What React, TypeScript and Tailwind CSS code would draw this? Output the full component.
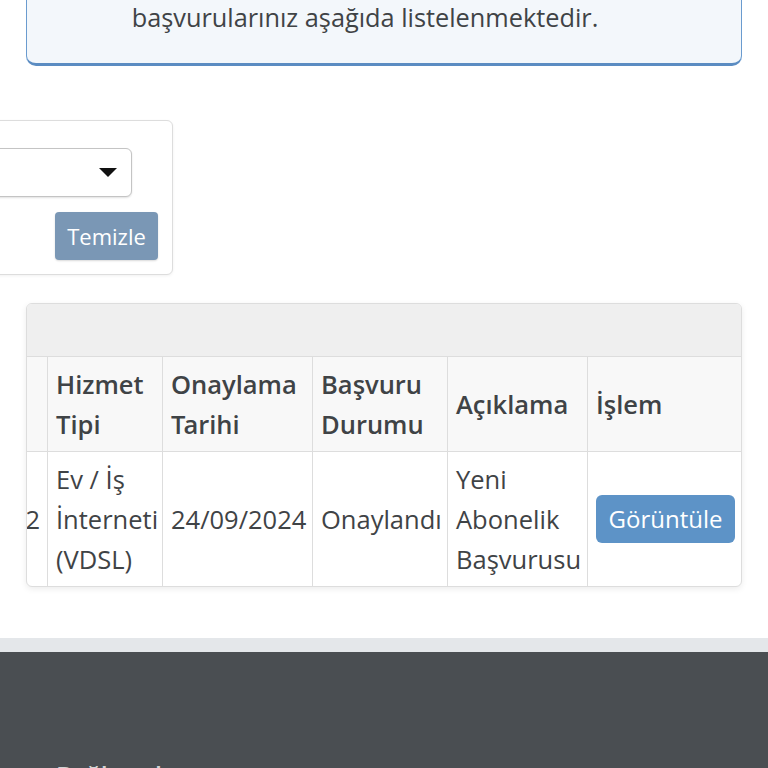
import React from "react";

export default function App() {
  const cell = "border border-[#dddddd] px-[8px] py-[7px] align-middle";
  const th =
    cell + " border-t-0 font-['Open_Sans_SemiBold','Open_Sans',sans-serif] font-semibold";
  return (
    <div className="min-h-[900px] overflow-hidden bg-white font-['Open_Sans',_sans-serif] text-[#3f4346]">
      <div className="px-[26px]">
        {/* info box */}
        <div className="-mt-[40px] rounded-[10px] border border-b-[3px] border-[#6a9bcf] border-b-[#5b8cc2] bg-[#f3f7fb] pt-[38px] pb-[28px] pr-[38px] text-center text-[25.3px] leading-[36px]">
          başvurularınız aşağıda listelenmektedir.
        </div>

        {/* filter card */}
        <div className="mt-[54px] -ml-[253px] w-[400px] rounded-[6px] border border-[#dddddd] bg-white pt-[27px] pb-[14px] pr-[14px] shadow-[0_1px_3px_rgba(0,0,0,0.06)]">
          <div className="flex flex-col items-end">
            <div className="mr-[26px] flex h-[49px] w-[300px] items-center justify-end rounded-[6px] border border-[#c4c4c4] bg-white pr-[14px] shadow-[0_1px_2px_rgba(0,0,0,0.12)]">
              <svg width="18" height="9" viewBox="0 0 18 9">
                <polygon points="0,0 18,0 9,9" fill="#111" />
              </svg>
            </div>
            <button className="mt-[15px] h-[48px] w-[103px] rounded-[4px] bg-[#7a97b5] text-[22px] text-white shadow-[0_1px_2px_rgba(0,0,0,0.15)]">
              Temizle
            </button>
          </div>
        </div>

        {/* table panel */}
        <div className="mt-[28px] overflow-hidden rounded-[6px] border border-[#dddddd] bg-white shadow-[0_2px_6px_rgba(0,0,0,0.08)]">
          <div className="h-[53px] border-b border-[#dddddd] bg-[#efefef]" />
          <div className="overflow-hidden">
            <table className="-ml-[40px] w-[755px] max-w-none table-fixed border-collapse text-[25.5px] leading-[40px]">
              <colgroup>
                <col className="w-[60px]" />
                <col className="w-[115px]" />
                <col className="w-[150px]" />
                <col className="w-[135px]" />
                <col className="w-[140px]" />
                <col className="w-[155px]" />
              </colgroup>
              <thead>
                <tr className="bg-[#f8f8f8] text-left">
                  <th className={th}></th>
                  <th className={th}>Hizmet Tipi</th>
                  <th className={th}>Onaylama Tarihi</th>
                  <th className={th}>Başvuru Durumu</th>
                  <th className={th}>Açıklama</th>
                  <th className={th + " border-r-0"}>İşlem</th>
                </tr>
              </thead>
              <tbody>
                <tr>
                  <td className={cell + " border-b-0 pr-[7px] text-right"}>2</td>
                  <td className={cell + " border-b-0"}>Ev / İş İnterneti (VDSL)</td>
                  <td className={cell + " border-b-0"}>24/09/2024</td>
                  <td className={cell + " border-b-0"}>Onaylandı</td>
                  <td className={cell + " border-b-0"}>Yeni Abonelik Başvurusu</td>
                  <td className={cell + " border-b-0 border-r-0"}>
                    <button className="h-[48px] w-[139px] rounded-[6px] bg-[#5d93c7] text-[24px] leading-[48px] text-white">
                      Görüntüle
                    </button>
                  </td>
                </tr>
              </tbody>
            </table>
          </div>
        </div>
      </div>

      {/* footer */}
      <div className="mt-[51px] h-[14px] bg-[#e4e7ea]" />
      <div className="h-[300px] bg-[#4a4e52] px-[56px] pt-[108px]">
        <div className="text-[25px] font-semibold leading-[30px] text-[#d0d2d4]">Bağlantılar</div>
      </div>
    </div>
  );
}
